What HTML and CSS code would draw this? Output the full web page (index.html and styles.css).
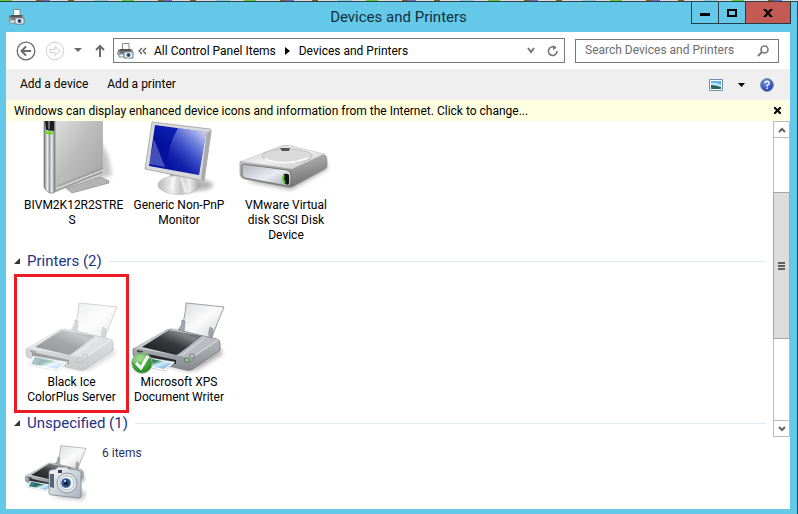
FILE: index.html
```html
<!DOCTYPE html>
<html lang="en">
<head>
<meta charset="utf-8">
<title>Devices and Printers</title>
<link rel="stylesheet" href="styles.css">
</head>
<body>
<svg class="defs" aria-hidden="true">
  <defs>
    <linearGradient id="gPaper" x1="0" y1="0" x2="1" y2="1"><stop offset="0" stop-color="#d9dbdd"/><stop offset=".5" stop-color="#fbfbfb"/><stop offset="1" stop-color="#c9cbcd"/></linearGradient>
    <linearGradient id="gTop" x1="0" y1="1" x2="1" y2="0"><stop offset="0" stop-color="#161719"/><stop offset=".5" stop-color="#3a3c3f"/><stop offset=".75" stop-color="#7f8285"/><stop offset="1" stop-color="#505255"/></linearGradient>
    <linearGradient id="gBody" x1="0" y1="0" x2="0" y2="1"><stop offset="0" stop-color="#c6c9cd"/><stop offset="1" stop-color="#85898f"/></linearGradient>
    <linearGradient id="gPhoto" x1="0" y1="0" x2="1" y2="1"><stop offset="0" stop-color="#2c72ba"/><stop offset=".45" stop-color="#3d8a6c"/><stop offset=".6" stop-color="#d7ecf8"/><stop offset="1" stop-color="#4a9bdc"/></linearGradient>
    <linearGradient id="gSide" x1="0" y1="0" x2="1" y2="1"><stop offset="0" stop-color="#dedede"/><stop offset=".45" stop-color="#bcbcbc"/><stop offset="1" stop-color="#a0a0a0"/></linearGradient>
    <linearGradient id="gFront" x1="0" y1="0" x2="1" y2="0"><stop offset="0" stop-color="#6f7275"/><stop offset=".3" stop-color="#f2f3f6"/><stop offset=".5" stop-color="#9b9da3"/><stop offset=".7" stop-color="#eceef2"/><stop offset="1" stop-color="#75777a"/></linearGradient>
    <linearGradient id="gScreen" x1="0" y1="1" x2="1" y2="0"><stop offset="0" stop-color="#0a1ab0"/><stop offset=".4" stop-color="#04109c"/><stop offset="1" stop-color="#1a34d0"/></linearGradient>
    <linearGradient id="gGlare" x1="1" y1="0" x2=".2" y2="1"><stop offset="0" stop-color="#fff" stop-opacity=".9"/><stop offset=".5" stop-color="#7e92ea" stop-opacity=".5"/><stop offset="1" stop-color="#2233cc" stop-opacity="0"/></linearGradient>
    <linearGradient id="gBase" x1="0" y1="0" x2="1" y2="0"><stop offset="0" stop-color="#b8b8b8"/><stop offset=".35" stop-color="#f1f1f1"/><stop offset=".55" stop-color="#c4c4c4"/><stop offset=".75" stop-color="#eeeeee"/><stop offset="1" stop-color="#9f9f9f"/></linearGradient>
    <linearGradient id="gDisk" x1="0" y1="0" x2="1" y2="1"><stop offset="0" stop-color="#c9c9c9"/><stop offset=".5" stop-color="#f0f0f0"/><stop offset="1" stop-color="#c2c2c2"/></linearGradient>
    <linearGradient id="gDiskSide" x1="0" y1="0" x2=".5" y2="1"><stop offset="0" stop-color="#eeeeee"/><stop offset=".5" stop-color="#b2b2b2"/><stop offset="1" stop-color="#777"/></linearGradient>
    <linearGradient id="gDiskFace" x1="0" y1="0" x2="1" y2="1"><stop offset="0" stop-color="#b3b4ba"/><stop offset=".55" stop-color="#e9eaf2"/><stop offset="1" stop-color="#a5a6ad"/></linearGradient>
    <linearGradient id="gCam" x1="0" y1="0" x2="1" y2="1"><stop offset="0" stop-color="#f6f8fa"/><stop offset="1" stop-color="#a9b2bc"/></linearGradient>
    <radialGradient id="gHelp" cx=".4" cy=".3" r=".8"><stop offset="0" stop-color="#6f93e6"/><stop offset="1" stop-color="#1432a4"/></radialGradient>
    <radialGradient id="gOk" cx=".4" cy=".3" r=".8"><stop offset="0" stop-color="#7fd06c"/><stop offset="1" stop-color="#0f8010"/></radialGradient>
    <filter id="soft" x="-30%" y="-60%" width="160%" height="220%"><feGaussianBlur stdDeviation="2"/></filter>
    <symbol id="printer" viewBox="0 0 96 72">
      <path d="M20 60 57 69 66 68 92 52 88 44Z" fill="#000" opacity=".3" filter="url(#soft)"/>
      <path d="M55 2Q54 1 56 1L93 5 80 37 49 28Q54 18 55 2Z" fill="url(#gPaper)" stroke="#85888b" stroke-width=".8"/>
      <path d="M47 28Q51 24 51 18L54 19 53 31ZM78 36Q77 30 79 25L82 27 81 38Z" fill="#a3a7ab" stroke="#70747a" stroke-width=".5"/>
      <path d="M2 47 36 28Q38 27 41 27L86 37Q89 38 89 41V48L62 67Q59 69 55 68L5 56Q2 55 2 52Z" fill="url(#gBody)" stroke="#6f7378" stroke-width=".7"/>
      <path d="M3 46 36 28Q38 27 41 27L87 38 60 56 50 54Z" fill="#c7cacd"/>
      <path d="M11 45 38 28 71 34 50 51Q48 53 45 53Z" fill="url(#gTop)"/>
      <path d="M46 53 72 34 87 38 59 57Z" fill="#b9bdc1"/>
      <path d="M51 53 74 36M59 57 87 38" fill="none" stroke="#e7e9eb" stroke-width=".8"/>
      <ellipse cx="56" cy="58" rx="2.800" ry="2.200" fill="#7ccf7c" stroke="#666" stroke-width=".9"/>
      <ellipse cx="61" cy="54" rx="2.600" ry="2" fill="#c3c5c7" stroke="#666" stroke-width=".8"/>
      <path d="M8 50 17 52 45 58V62L8 54Z" fill="#25272a"/>
      <path d="M9 54 44 60 34 69 4 63Z" fill="#fff" stroke="#9aa" stroke-width=".5"/>
      <path d="M11 55 41 61 33 67 7 62Z" fill="url(#gPhoto)"/>
      <path d="M17 57 24 59 13 63Z" fill="#1c4f57" opacity=".7"/>
      <path d="M6 48 12 49V51L6 50Z" fill="#444"/>
    </symbol>
    <symbol id="miniprinter" viewBox="0 0 17 16">
      <path d="M5.500.5H12V7H5.500Z" fill="#fff" stroke="#878787"/>
      <path d="M1 6.500H16V12H1Z" fill="#777"/>
      <path d="M0 9H3V12H0ZM14 7H16V12H14Z" fill="#a2a2a2"/>
      <path d="M3 7H14" stroke="#555" stroke-width="2"/>
      <path d="M2 11H9V14H2Z" fill="#e8eef2" stroke="#799"/>
      <path d="M7 9H16V15H7Z" fill="#e9edf0" stroke="#777"/>
      <circle cx="11.500" cy="12" r="2.500" fill="#3b688f" stroke="#fff" stroke-width=".8"/>
      <circle cx="11.500" cy="12" r="1" fill="#112e50"/>
    </symbol>
  </defs>
</svg>
<div class="backdrop"></div>
<div class="window">
  <header class="titlebar">
    <svg class="app-icon" viewBox="0 0 17 16"><use href="#miniprinter"/></svg>
    <h1>Devices and Printers</h1>
    <div class="controls">
      <button class="min" aria-label="Minimize"><svg width="10" height="10"><path d="M0 5H10V8H0Z"/></svg></button>
      <button class="max" aria-label="Maximize"><svg width="10" height="10"><path d="M0 1H10V9H0ZM2 3V7H8V3Z" fill-rule="evenodd"/></svg></button>
      <button class="close" aria-label="Close"><svg width="10" height="10"><path d="M0 1H3L5 3.500 7 1H10L6.500 5 10 9H7L5 6.500 3 9H0L3.500 5Z"/></svg></button>
    </div>
  </header>
  <div class="frame">
    <nav class="navbar">
      <button class="nav-btn" aria-label="Back"><svg width="20" height="20" viewBox="0 0 20 20" fill="none" stroke="#6a6a6a"><circle cx="10" cy="10" r="8.800" stroke-width="1.300"/><path d="M15 10H6M10 5.500 5.500 10 10 14.500" stroke-width="2"/></svg></button>
      <button class="nav-btn" aria-label="Forward"><svg width="20" height="20" viewBox="0 0 20 20" fill="none" stroke="#cfcfcf"><circle cx="10" cy="10" r="8.800"/><path d="M5 8.500H10V5.500L15 10 10 14.500V11.500H5Z"/></svg></button>
      <button class="recent" aria-label="Recent locations"><svg width="8" height="5"><path d="M0 0H8L4 4Z" fill="#6a6a6a"/></svg></button>
      <button class="up" aria-label="Up"><svg width="10" height="13" fill="none" stroke="#6a6a6a" stroke-width="2"><path d="M5 13V2M1 6 5 2 9 6"/></svg></button>
      <div class="address">
        <svg class="app-icon" viewBox="0 0 17 16"><use href="#miniprinter"/></svg>
        <svg class="chev" width="9" height="8" fill="none" stroke="#555" stroke-width="1.200"><path d="M4 1 1 4 4 7M8 1 5 4 8 7"/></svg>
        <a href="#">All Control Panel Items</a>
        <svg class="sep" width="5" height="8"><path d="M0 0 5 4 0 8Z"/></svg>
        <a href="#">Devices and Printers</a>
        <button class="drop" aria-label="Previous locations"><svg width="8" height="7" fill="none" stroke="#777" stroke-width="2"><path d="M1 1 4 5 7 1"/></svg></button>
        <button class="refresh" aria-label="Refresh"><svg width="12" height="12" fill="none" stroke="#777" stroke-width="1.600"><path d="M8 2.500A4.300 4.300 0 1 0 10 6"/><path d="M6 0 9.500 2.500 6 5.500Z" fill="#777" stroke="none"/></svg></button>
      </div>
      <label class="search">
        <input type="text" placeholder="Search Devices and Printers" aria-label="Search Devices and Printers">
        <svg width="12" height="12" fill="none" stroke="#777"><circle cx="7.500" cy="4.500" r="3.500" stroke-width="1.600"/><path d="M5 7 1 11" stroke-width="2"/></svg>
      </label>
    </nav>
    <div class="toolbar">
      <button>Add a device</button>
      <button>Add a printer</button>
      <div class="tools">
        <button aria-label="Change view"><svg width="14" height="12"><path d="M.5.5H13.500V11.500H.5Z" fill="#fff" stroke="#6f8fb0"/><path d="M2 2H12V6H2Z" fill="#5fb2ea"/><path d="M2 4Q6 3 12 6V8H2Z" fill="#c5e6f6"/><path d="M2 6Q6 6 12 8V10H2Z" fill="#22665c"/></svg></button>
        <button aria-label="More options"><svg width="7" height="4"><path d="M0 0H7L3.500 4Z"/></svg></button>
        <button aria-label="Help"><svg width="14" height="14" viewBox="0 0 14 14"><circle cx="7" cy="7" r="6.400" fill="url(#gHelp)" stroke="#7f8cab"/><path d="M4.800 5.300Q5 3.200 7.100 3.200 9.300 3.300 9.200 5.200 9.100 6.300 7.200 7.300V8.500M7.200 9.600V11" fill="none" stroke="#fff" stroke-width="1.500"/></svg></button>
      </div>
    </div>
    <div class="infobar">
      <a href="#">Windows can display enhanced device icons and information from the Internet. Click to change...</a>
      <button aria-label="Dismiss"><svg width="7" height="7" stroke="#000" stroke-width="2"><path d="M0 0 7 7M7 0 0 7"/></svg></button>
    </div>
    <div class="view">
      <main class="list">
        <section class="items">
          <figure>
            <svg width="96" height="74" viewBox="0 0 96 74">
              <path d="M40 70 88 54 84 34 76 20V50Z" fill="#000" opacity=".22" filter="url(#soft)"/>
              <path d="M42 67 76 56 85 60 85 62 48 72Z" fill="#b4b4b4" stroke="#858585" stroke-width=".6"/>
              <path d="M30 0H79V48Q79 51 76 53L30 72Z" fill="url(#gSide)"/>
              <path d="M34 65 79 47M31 70 79 51" stroke="#8d8d8d" stroke-width=".8" fill="none"/>
              <path d="M32 68 79 49" stroke="#e2e2e2" fill="none"/>
              <path d="M20 0H31V70Q29 74 24 71L21 68Q20 67 20 65Z" fill="url(#gFront)" stroke="#77797b" stroke-width=".7"/>
              <path d="M21 0H30V10L22 9Z" fill="#1b1d1e"/><path d="M24 0H26V8H24Z" fill="#65717a"/>
              <path d="M21 9Q25 12 29 10V13Q25 15 21 12Z" fill="#6ddc20"/>
            </svg>
            <figcaption>BIVM2K12R2STRE<br>S</figcaption>
          </figure>
          <figure>
            <svg width="96" height="74" viewBox="0 0 96 74">
              <ellipse cx="62" cy="64" rx="20" ry="6" fill="#000" opacity=".3" filter="url(#soft)"/>
              <path d="M38 50H58L60 60H40Z" fill="#a7a7a7"/>
              <ellipse cx="48" cy="64" rx="21" ry="9.500" fill="url(#gBase)" stroke="#bbb" stroke-width=".6"/>
              <path d="M44 56 40 68M50 56 55 71" stroke="#fff" opacity=".5" stroke-width="3"/>
              <path d="M21 1 79 8Q81 9 80 11L73 60 14 48Z" fill="#d9d9d9" stroke="#9d9d9d" stroke-width=".8"/>
              <path d="M80 10 73 60 70 58 76 11Z" fill="#aaa"/>
              <path d="M24 4 75 11 68 54 18 45Z" fill="url(#gScreen)"/>
              <path d="M47 7 75 11 68 54 36 48Q36 26 47 7Z" fill="url(#gGlare)"/>
              <path d="M23 18 34 46 18 43Z" fill="#fff" opacity=".25"/>
            </svg>
            <figcaption>Generic Non-PnP<br>Monitor</figcaption>
          </figure>
          <figure>
            <svg width="96" height="74" viewBox="0 0 96 74">
              <path d="M8 60 53 69 90 48 86 38Z" fill="#000" opacity=".3" filter="url(#soft)"/>
              <path d="M2 41 44 25Q48 24 52 25L85 33Q89 34 89 39V45Q89 47 87 48L56 65Q53 67 49 66L7 58Q2 57 2 52Z" fill="url(#gDiskSide)" stroke="#929292" stroke-width=".7"/>
              <path d="M3 40 44 25Q48 24 52 25L86 33 54 48Z" fill="url(#gDisk)"/>
              <ellipse cx="49" cy="35" rx="25" ry="7" fill="#dadada" stroke="#b6b6b6" stroke-width=".7"/>
              <path d="M27 38Q48 46 70 37" stroke="#fff" fill="none" stroke-width="1.500"/>
              <path d="M42 27 52 27 51 30 44 30Z" fill="#555"/>
              <path d="M5 43 49 49Q53 50 53 54V61Q53 66 49 65L7 57Q4 56 4 53V45Q4 43 5 43Z" fill="url(#gDiskFace)" stroke="#737373"/>
              <path d="M46 53Q51 52 51 55V62L50 64 46 62Q44 56 46 53Z" fill="#111"/>
              <path d="M46 54Q44 58 47 62" stroke="#46d820" stroke-width="2" fill="none"/>
            </svg>
            <figcaption>VMware Virtual<br>disk SCSI Disk<br>Device</figcaption>
          </figure>
        </section>
        <h2><svg width="6" height="6"><path d="M6 0V6H0Z" fill="#333"/></svg>Printers (2)</h2>
        <section class="items printers">
          <figure class="marked">
            <svg class="faded" width="96" height="72"><use href="#printer"/></svg>
            <figcaption>Black Ice<br>ColorPlus Server</figcaption>
          </figure>
          <figure>
            <svg width="96" height="72"><use href="#printer"/><circle cx="11" cy="61" r="10.300" fill="url(#gOk)" stroke="#9fb49f"/><path d="M2 56Q11 48 20 56 13 60 2 61Z" fill="#fff" opacity=".25"/><path d="M5 61 10 66 17 54" fill="none" stroke="#fff" stroke-width="3"/></svg>
            <figcaption>Microsoft XPS<br>Document Writer</figcaption>
          </figure>
        </section>
        <h2><svg width="6" height="6"><path d="M6 0V6H0Z" fill="#333"/></svg>Unspecified (1)</h2>
      </main>
      <div class="scrollbar">
        <button aria-label="Scroll up"><svg width="8" height="6" fill="none" stroke="#606060" stroke-width="2"><path d="M1 5 4 2 7 5"/></svg></button>
        <div class="track"><div class="thumb"><i></i><i></i><i></i></div></div>
        <button aria-label="Scroll down"><svg width="8" height="6" fill="none" stroke="#606060" stroke-width="2"><path d="M1 1 4 4 7 1"/></svg></button>
      </div>
    </div>
    <footer class="details">
      <svg width="64" height="64" viewBox="0 0 64 64">
        <svg y="5" width="64" height="48" viewBox="0 0 96 72"><use href="#printer"/></svg>
        <path d="M27 57 58 60 62 55 58 49Z" fill="#000" opacity=".25" filter="url(#soft)"/>
        <path d="M27 30 32 29 34 27 43 27 45 29 54 30Q57 31 57 33V55Q57 58 55 58L28 55Q25 55 25 53V32Q25 30 27 30Z" fill="url(#gCam)" stroke="#7e8790" stroke-width=".8"/>
        <path d="M26 34H30V48L26 47Z" fill="#536578"/><path d="M34 30H38V33H34Z" fill="#26415f"/>
        <circle cx="43" cy="43" r="10" fill="#dfe4ea" stroke="#8e98a3"/><circle cx="43" cy="43" r="7" fill="#f4f6f8" stroke="#9aa5b2" stroke-width=".7"/>
        <circle cx="42" cy="43" r="4.800" fill="#2a5389"/><circle cx="42" cy="43" r="2.200" fill="#0c1d38"/><circle cx="41" cy="41" r="1.200" fill="#a8d2f5"/>
      </svg>
      <span>6 items</span>
    </footer>
  </div>
</div>
</body>
</html>
```
FILE: styles.css
```css
* { box-sizing: border-box; }
body {
  margin: 0;
  height: 100vh;
  display: flex;
  flex-direction: column;
  overflow: hidden;
  font: 12px/15px Roboto, "Open Sans", sans-serif;
  color: #000;
}
button { border: 0; padding: 0; background: none; font: inherit; color: inherit; display: grid; place-items: center; }
a { color: inherit; text-decoration: none; }
h1, h2, figure { margin: 0; font-weight: 400; }
svg { display: block; flex: none; }
.defs { position: absolute; width: 0; height: 0; }
.backdrop {
  height: 1px;
  flex: none;
  background: repeating-linear-gradient(90deg, #5fd02e 0 12px, #ddd 12px 36px, #8a5a12 36px 42px, #6a6ad0 42px 50px, #ddd 50px 68px, #8a5a12 68px 74px, #ddd 74px 94px, #8fd0e0 94px 108px, #ddd 108px 122px);
}
.window {
  flex: 1;
  min-height: 0;
  display: flex;
  flex-direction: column;
  background: #64c9e9;
  border-top: 1px solid #2c4450;
  border-right: 1px solid #2c4450;
  padding: 0 7px 5px 6px;
}
.titlebar { height: 30px; flex: none; display: grid; grid-template-columns: 100px 1fr 100px; align-items: center; margin-right: -1px; }
.app-icon { width: 17px; height: 16px; }
.titlebar .app-icon { margin-left: 2px; }
h1 { font-size: 15px; line-height: 20px; text-align: center; color: #12303c; }
.controls { display: flex; align-self: start; height: 22px; justify-content: flex-end; }
.controls button { border: 1px solid #263d48; border-top: 0; height: 22px; }
.min { width: 29px; }
.controls .max { width: 27px; border-left: 0; }
.controls .close { width: 46px; border-left: 0; background: #c35a54; }
.frame { flex: 1; min-height: 0; display: flex; flex-direction: column; background: #fff; }
.navbar { height: 37px; flex: none; display: flex; align-items: center; padding: 0 11px 0 10px; }
.nav-btn { margin-right: 9px; }
.recent { width: 8px; }
.up { margin: 0 8px 0 13px; }
.address { flex: 1; height: 25px; display: flex; align-items: center; border: 1px solid #777; padding: 0 5px 0 3px; }
.chev { margin: 0 7px 0 4px; }
.sep { margin: 0 9px; }
.drop { margin-left: auto; }
.refresh { margin-left: 12px; }
.search { width: 204px; height: 24px; display: flex; align-items: center; border: 1px solid #777; margin-left: 10px; padding: 0 9px; }
.search input { flex: 1; min-width: 0; border: 0; padding: 0; outline: 0; font: inherit; background: none; }
.search input::placeholder { color: #6d6d6d; opacity: 1; }
.toolbar { height: 31px; flex: none; display: flex; align-items: center; gap: 19px; padding: 0 16px 0 14px; background: #efefef; }
.tools { margin-left: auto; display: flex; align-items: center; gap: 15px; }
.infobar { height: 21px; flex: none; display: flex; align-items: center; justify-content: space-between; padding: 0 9px 0 8px; background: #ffffe1; }
.address a, .infobar a { padding-top: 1px; }
.view { display: grid; grid-template-columns: 1fr 17px; flex: none; min-height: 316px; }
.list { min-width: 0; padding-right: 7px; }
.items { display: flex; min-height: 131px; padding-left: 18px; }
figure { width: 96px; margin-right: 11px; }
figcaption { text-align: center; white-space: nowrap; padding-top: 3px; }
h2 { display: flex; align-items: center; gap: 7px; height: 18px; margin-left: 8px; font-size: 15px; line-height: 18px; color: #1e3287; }
h2::after { content: ""; flex: 1; height: 1px; background: #dde8f3; }
.printers { min-height: 144px; padding: 4px 0 1px 8px; }
.printers figure { padding-top: 28px; }
.printers .marked { width: 115px; height: 139px; border: 3px solid #ed1c24; padding: 25px 0 0 7px; margin-right: 2px; }
.printers figcaption { padding-top: 1px; }
.marked figcaption { margin-right: 7px; }
.faded { opacity: .45; }
.scrollbar { display: flex; flex-direction: column; border: 1px solid #bbb; }
.scrollbar button { height: 16px; flex: none; }
.scrollbar button:first-child { border-bottom: 1px solid #bbb; }
.scrollbar button:last-child { border-top: 1px solid #bbb; }
.track { flex: 1; display: grid; grid-template-rows: 54fr 148fr 81fr; }
.thumb { grid-row: 2; background: #dcdcdc; border: 1px solid #a6a6a6; margin: 0 -1px; display: flex; flex-direction: column; align-items: center; justify-content: center; gap: 1px; }
.thumb i { width: 7px; height: 2px; background: #606060; }
.details { display: flex; gap: 14px; padding: 3px 0 0 18px; color: #1e3264; }
.details span { padding-top: 6px; }
```
